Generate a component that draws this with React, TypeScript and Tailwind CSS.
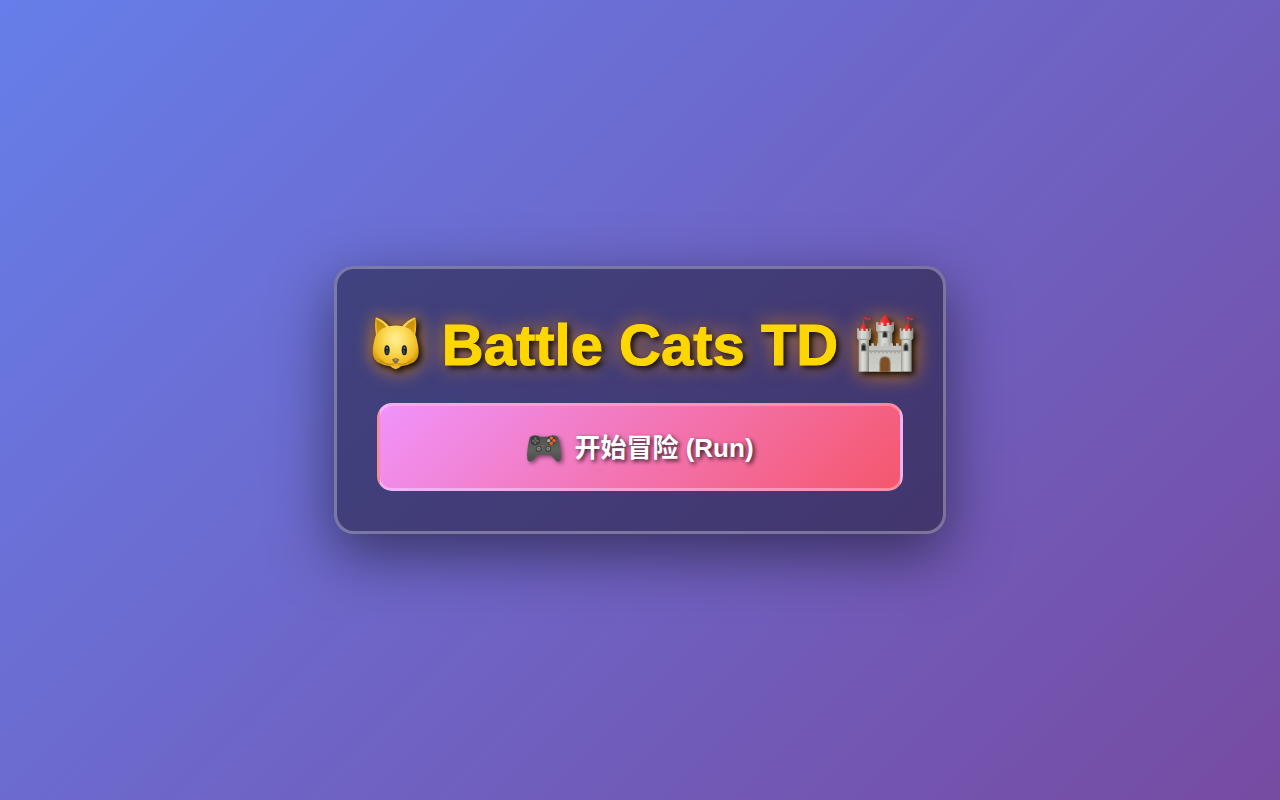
import React from "react";

const CatIcon: React.FC = () => (
  <svg
    viewBox="27 41 192 192"
    role="img"
    aria-label="Cat"
    className="size-16 shrink-0 overflow-visible drop-shadow-[3px_3px_3px_rgba(0,0,0,0.9)]"
  >
    <defs>
      <radialGradient id="catFace" cx="0.5" cy="0.42" r="0.6">
        <stop offset="0" stopColor="#ffef98" />
        <stop offset="0.4" stopColor="#fbdb58" />
        <stop offset="0.78" stopColor="#f0bd24" />
        <stop offset="1" stopColor="#cf920c" />
      </radialGradient>
      <linearGradient id="catEar" x1="0" y1="0" x2="0" y2="1">
        <stop offset="0" stopColor="#c08a0c" />
        <stop offset="1" stopColor="#dba20e" />
      </linearGradient>
    </defs>
    <path
      d="M61 57Q62 52 68 55Q88 63 102 81Q122 76 142 81Q156 63 175 55Q181 52 182 57Q186 78 181 106Q185 115 187 128Q191 142 191 158Q191 178 176 189Q158 199 138 201Q131 209 122 210Q113 209 106 201Q86 199 68 189Q53 178 53 158Q53 142 57 128Q59 115 63 106Q58 78 61 57Z"
      fill="url(#catFace)"
    />
    <path d="M66 62Q82 68 94 83Q74 88 67 105Q63 80 66 62Z" fill="url(#catEar)" />
    <path d="M177 62Q162 68 150 83Q170 88 176 105Q181 80 177 62Z" fill="url(#catEar)" />
    <path
      d="M64 57Q84 65 98 82M179 57Q160 65 146 82"
      fill="none"
      stroke="#fce280"
      strokeWidth="2.5"
      strokeLinecap="round"
    />
    <ellipse cx="96" cy="153" rx="8" ry="15" fill="#1b2023" />
    <ellipse cx="148" cy="153" rx="8" ry="15" fill="#1b2023" />
    <ellipse cx="97" cy="158" rx="4" ry="7" fill="#34434f" />
    <ellipse cx="147" cy="158" rx="4" ry="7" fill="#34434f" />
    <circle cx="96" cy="146" r="3" fill="#6a757c" />
    <circle cx="148" cy="146" r="3" fill="#6a757c" />
    <path
      d="M78 186Q90 195 104 195Q117 195 122 190Q127 195 140 195Q154 195 166 186"
      fill="none"
      stroke="#c0820f"
      strokeWidth="3"
      strokeLinecap="round"
    />
    <path
      d="M66 178L80 184M72 190L86 185M178 178L164 184M172 190L158 185"
      stroke="#c48a12"
      strokeWidth="2"
    />
    <path d="M108 198Q122 204 136 198Q131 208 122 208Q113 208 108 198Z" fill="#f4c02a" />
    <path d="M112 180Q122 174 132 180Q133 185 122 193Q111 185 112 180Z" fill="#7a6146" />
    <ellipse cx="122" cy="182" rx="6" ry="2" fill="#aa9981" />
  </svg>
);

const CastleIcon: React.FC = () => (
  <svg
    viewBox="36 41 192 192"
    role="img"
    aria-label="Castle"
    className="size-16 shrink-0 overflow-visible drop-shadow-[3px_3px_3px_rgba(0,0,0,0.9)]"
  >
    <defs>
      <linearGradient id="stone" x1="0" y1="0" x2="1" y2="0">
        <stop offset="0" stopColor="#a9aaa4" />
        <stop offset="0.35" stopColor="#dcddd7" />
        <stop offset="0.65" stopColor="#c9cac4" />
        <stop offset="1" stopColor="#85867f" />
      </linearGradient>
      <linearGradient id="wall" x1="0" y1="0" x2="0" y2="1">
        <stop offset="0" stopColor="#bfc0ba" />
        <stop offset="1" stopColor="#d0d1cb" />
      </linearGradient>
      <linearGradient id="roof" x1="0" y1="0" x2="1" y2="0">
        <stop offset="0" stopColor="#ff5a4c" />
        <stop offset="0.5" stopColor="#ed2929" />
        <stop offset="1" stopColor="#bd1119" />
      </linearGradient>
    </defs>
    {/* centre tower */}
    <path d="M135 45L157 78H113Z" fill="url(#roof)" />
    <path d="M113 94H157V146H113Z" fill="url(#stone)" />
    <path d="M108 69H115V77H122V70H130V79H140V70H148V77H155V69H162V94L156 100H114L108 94Z" fill="url(#stone)" />
    <path d="M110 95H160L156 100H114Z" fill="#a0a19a" />
    <path d="M127 115V103Q127 94 135 94Q143 94 143 103V115Z" fill="#73756f" />
    <path d="M130 113V104Q131 98 135 98Q140 99 140 105V113Z" fill="#252829" />
    {/* curtain wall */}
    <path d="M86 217V139H94V132H102V139H111V132H119V139H130V132H140V139H151V132H159V139H168V132H176V139H185V217Z" fill="url(#wall)" />
    <path
      d="M87 153H184V158H180V162H174V158H168V162H162V158H156V162H150V158H144V162H138V158H132V162H126V158H120V162H114V158H108V162H102V158H96V162H90V158H87Z"
      fill="#a5a7a0"
    />
    <path
      d="M88 177H184M88 192H184M88 206H184M103 163V177M112 177V192M166 177V192M175 163V177M103 192V206M172 192V206"
      stroke="#bfc1ba"
      strokeWidth="1"
    />
    <path d="M118 217V190Q118 171 135 171Q152 171 152 190V217Z" fill="#8b877b" />
    <path d="M121 217V190Q122 174 135 174Q148 175 149 190V217Z" fill="#865126" />
    <path d="M128 177V217M135 174V217M142 177V217" stroke="#6b3d1e" strokeWidth="1" />
    {/* left tower */}
    <path d="M70 63V75" stroke="#8c6a64" strokeWidth="2" />
    <path d="M69 54Q74 49 80 54Q86 58 94 56L90 62Q82 65 77 60Q73 58 69 62Z" fill="#bb2937" />
    <path d="M76 54L78 60M87 57L88 62" stroke="#d98384" strokeWidth="1" />
    <path d="M70 70L86 97H56Z" fill="url(#roof)" />
    <path d="M56 115H87V217H56Z" fill="url(#stone)" />
    <path d="M51 87H57V94H64V88H70V95H77V88H84V94H88V87H93V117L88 122H56L51 117Z" fill="url(#stone)" />
    <path d="M53 118H91L87 122H56Z" fill="#a0a19a" />
    <path d="M63 156V142Q63 131 71 131Q79 131 79 142V156Z" fill="#777973" />
    <path d="M66 153V142Q67 136 71 136Q76 137 76 143V153Z" fill="#252829" />
    {/* right tower */}
    <path d="M204 63V75" stroke="#8c6a64" strokeWidth="2" />
    <path d="M197 54Q202 49 208 54Q214 58 222 56L218 62Q210 65 205 60Q201 58 197 62Z" fill="#bb2937" />
    <path d="M204 54L206 60M215 57L216 62" stroke="#d98384" strokeWidth="1" />
    <path d="M203 70L216 97H186Z" fill="url(#roof)" />
    <path d="M184 115H215V217H184Z" fill="url(#stone)" />
    <path d="M179 87H184V94H189V88H196V95H203V88H210V94H215V87H220V117L215 122H184L179 117Z" fill="url(#stone)" />
    <path d="M181 118H218L215 122H184Z" fill="#a0a19a" />
    <path d="M190 156V142Q190 131 198 131Q206 131 206 142V156Z" fill="#777973" />
    <path d="M193 153V142Q194 136 198 136Q203 137 203 143V153Z" fill="#252829" />
  </svg>
);

const GamepadIcon: React.FC = () => (
  <svg
    viewBox="12 6 108 108"
    aria-hidden="true"
    className="size-9 shrink-0 overflow-visible drop-shadow-[2px_2px_2px_rgba(0,0,0,0.5)]"
  >
    <defs>
      <linearGradient id="padBody" x1="0" y1="0" x2="0" y2="1">
        <stop offset="0" stopColor="#4e504d" />
        <stop offset="0.55" stopColor="#5f615d" />
        <stop offset="1" stopColor="#4a4c48" />
      </linearGradient>
    </defs>
    <path
      d="M24 27Q36 18 50 24L55 26H77L82 24Q96 18 108 27Q113 42 116 68Q119 96 111 100Q103 103 95 91Q88 81 82 80H50Q44 81 37 91Q29 103 21 100Q13 96 16 68Q19 42 24 27Z"
      fill="url(#padBody)"
    />
    <circle cx="40" cy="38" r="14" fill="#383a38" />
    <path d="M37 28H43V35H50V41H43V48H37V41H30V35H37Z" fill="#6b6d69" />
    <circle cx="40" cy="38" r="3" fill="#464846" />
    <circle cx="88" cy="38" r="14" fill="#45403c" />
    <circle cx="88" cy="30" r="5" fill="#f4602a" />
    <circle cx="96" cy="38" r="5" fill="#f4602a" />
    <circle cx="88" cy="46" r="5" fill="#f4602a" />
    <circle cx="80" cy="38" r="5" fill="#b7a499" />
    <circle cx="64" cy="53" r="3" fill="#a9562e" />
    <circle cx="50" cy="63" r="9" fill="#3a3c3a" />
    <circle cx="50" cy="62" r="6" fill="#8b8d88" />
    <circle cx="50" cy="62" r="3" fill="#646662" />
    <circle cx="79" cy="63" r="9" fill="#3a3c3a" />
    <circle cx="79" cy="62" r="6" fill="#8b8d88" />
    <circle cx="79" cy="62" r="3" fill="#646662" />
  </svg>
);

const App: React.FC = () => {
  return (
    <main className="flex min-h-screen items-center justify-center bg-[linear-gradient(135deg,#667eea_0%,#764ba2_100%)] font-['Liberation_Sans','Noto_Sans_CJK_SC',sans-serif]">
      <div className="w-full max-w-[612px] rounded-[20px] border-3 border-white/30 bg-black/40 p-10 shadow-[0_20px_60px_rgba(0,0,0,0.5)]">
        <h1 className="-mx-5 mt-1 mb-[26px] flex items-center justify-center gap-3.5 text-[58px] leading-16 font-bold whitespace-nowrap text-[#ffd700] [-webkit-text-stroke:1px_#ffd700] text-shadow-[3px_3px_6px_rgba(0,0,0,0.9),0_0_20px_rgba(255,150,0,0.8)]">
          <span className="drop-shadow-[0_0_9px_rgba(255,150,0,0.8)]">
            <CatIcon />
          </span>
          <span>Battle Cats TD</span>
          <span className="drop-shadow-[0_0_9px_rgba(255,150,0,0.8)]">
            <CastleIcon />
          </span>
        </h1>

        <button
          type="button"
          className="flex h-22 w-full cursor-pointer items-center justify-center gap-3 rounded-[15px] border-3 border-white/30 bg-[linear-gradient(135deg,#f093fb_0%,#f5576c_100%)] pt-0.5 text-[26px] font-bold text-white text-shadow-[2px_2px_4px_rgba(0,0,0,0.8)]"
        >
          <GamepadIcon />
          <span>开始冒险 (Run)</span>
        </button>
      </div>
    </main>
  );
};

export default App;
